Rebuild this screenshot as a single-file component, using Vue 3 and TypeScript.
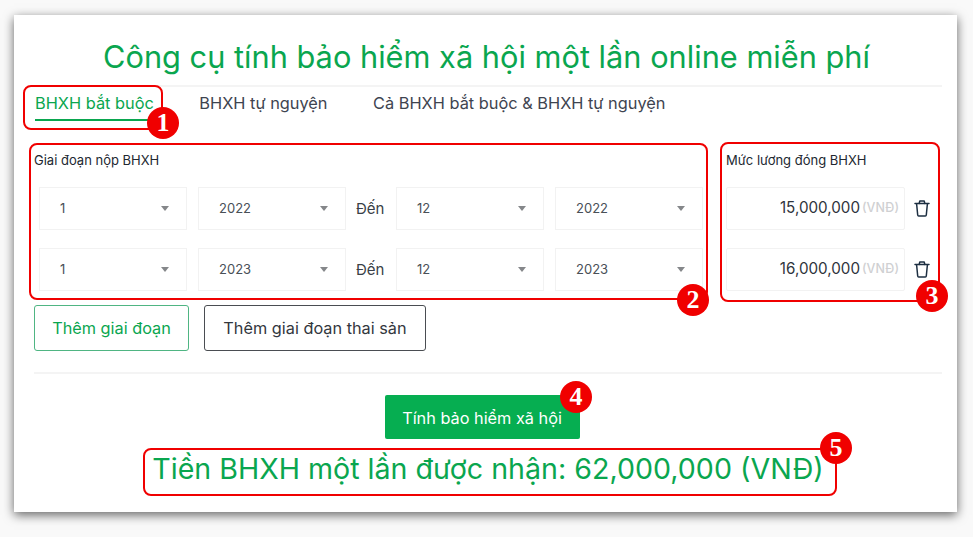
<script setup lang="ts">
interface Period { from: string; year: string; to: string; salary: string }
const periods: Period[] = [
  { from: '1', year: '2022', to: '12', salary: '15,000,000' },
  { from: '1', year: '2023', to: '12', salary: '16,000,000' },
]
const tabs = ['BHXH bắt buộc', 'BHXH tự nguyện', 'Cả BHXH bắt buộc & BHXH tự nguyện']
const marks = [1, 2, 3, 4, 5]
</script>

<template>
  <div class="page">
    <main class="card">
      <h1 class="title">Công cụ tính bảo hiểm xã hội một lần online miễn phí</h1>
      <nav class="tabs">
        <span v-for="(t, i) in tabs" :key="t" class="tab" :class="{ active: i === 0 }">{{ t }}</span>
      </nav>

      <section class="form">
        <div class="periods">
          <div class="label">Giai đoạn nộp BHXH</div>
          <div v-for="p in periods" :key="p.year" class="row">
            <div class="select"><span>{{ p.from }}</span><i class="arrow"></i></div>
            <div class="select"><span>{{ p.year }}</span><i class="arrow"></i></div>
            <span class="to">Đến</span>
            <div class="select"><span>{{ p.to }}</span><i class="arrow"></i></div>
            <div class="select"><span>{{ p.year }}</span><i class="arrow"></i></div>
          </div>
        </div>
        <div class="salaries">
          <div class="label">Mức lương đóng BHXH</div>
          <div v-for="p in periods" :key="p.salary" class="row">
            <div class="money"><span class="amount">{{ p.salary }}</span><span class="unit">(VNĐ)</span></div>
            <svg class="trash" viewBox="0 0 16 17" fill="none" stroke="#1d2f42" stroke-width="1.5" stroke-linejoin="round" stroke-linecap="round">
              <path d="M1 3.6h14" />
              <path d="M5.2 3.4 5.8 1h4.4l.6 2.4" />
              <path d="M2.6 3.8 3.7 15a1 1 0 0 0 1 .9h6.6a1 1 0 0 0 1-.9l1.1-11.2" />
            </svg>
          </div>
        </div>
      </section>

      <div class="actions">
        <button class="btn btn-green">Thêm giai đoạn</button>
        <button class="btn btn-dark">Thêm giai đoạn thai sản</button>
      </div>

      <hr class="rule" />

      <div class="submit"><button class="calc">Tính bảo hiểm xã hội</button></div>
      <p class="result">Tiền BHXH một lần được nhận: 62,000,000 (VNĐ)</p>

      <div v-for="m in marks" :key="'box' + m" class="box" :class="'box' + m"></div>
      <div v-for="m in marks" :key="'badge' + m" class="badge" :class="'badge' + m">{{ m }}</div>
    </main>
  </div>
</template>

<style scoped>
.page {
  width: 973px;
  height: 537px;
  box-sizing: border-box;
  padding: 15px 16px 25px 14px;
  background: #f9f9f9;
  overflow: hidden;
  font-family: Inter, "Noto Sans", sans-serif;
}
.card {
  position: relative;
  box-sizing: border-box;
  height: 497px;
  padding: 20px 15px 0 20px;
  background: #fff;
  box-shadow: 0 3px 10px rgba(0, 0, 0, 0.6);
}
.title {
  margin: 0 0 6px;
  padding-right: 3px;
  font-size: 30.75px;
  line-height: 44px;
  font-weight: 400;
  color: #0aa64f;
  text-align: center;
  white-space: nowrap;
}
.tabs {
  display: flex;
  gap: 45.5px;
  padding-left: 1px;
  border-top: 2px solid #f4f4f4;
}
.tab {
  box-sizing: border-box;
  height: 34px;
  padding-top: 5px;
  font-size: 16.35px;
  line-height: 22px;
  color: #3e4450;
  border-bottom: 2px solid transparent;
}
.tab.active {
  color: #0aa64f;
  border-bottom-color: #0aa64f;
}
.form {
  display: flex;
  justify-content: space-between;
  margin-top: 28px;
}
.label {
  font-size: 13px;
  line-height: 22px;
  color: #222831;
  margin-bottom: 16px;
}
.row {
  display: flex;
  align-items: center;
  height: 43px;
}
.row + .row {
  margin-top: 18px;
}
.periods {
  width: 669px;
}
.periods .row {
  gap: 11px;
  padding-left: 5px;
}
.salaries {
  width: 209px;
  padding-left: 0;
  margin-right: 7px;
}
.select {
  box-sizing: border-box;
  display: flex;
  flex-shrink: 0;
  align-items: center;
  justify-content: space-between;
  width: 148px;
  height: 43px;
  padding: 0 17px 2px 20px;
  border: 1px solid #f2f2f2;
  font-size: 13px;
  color: #495057;
}
.arrow {
  width: 0;
  height: 0;
  border-left: 4.5px solid transparent;
  border-right: 4.5px solid transparent;
  border-top: 5px solid #85878a;
  margin-top: 2px;
}
.to {
  flex: 0 0 28px;
  margin-top: -1px;
  font-size: 15px;
  white-space: nowrap;
  color: #3a3f47;
  text-indent: -1px;
}
.money {
  box-sizing: border-box;
  display: flex;
  align-items: center;
  justify-content: flex-end;
  gap: 2px;
  width: 179px;
  height: 43px;
  padding: 0 5px 2px 0;
  border: 1px solid #f2f2f2;
  border-radius: 2px;
}
.amount {
  font-size: 15.2px;
  color: #2f343c;
}
.unit {
  font-size: 12.5px;
  font-weight: 500;
  color: #cfd0d2;
}
.trash {
  width: 16px;
  height: 17px;
  margin-left: 9px;
}
.actions {
  display: flex;
  gap: 15px;
  margin-top: 14px;
}
.btn {
  box-sizing: border-box;
  height: 46px;
  background: #fff;
  border-radius: 3px;
  font-family: inherit;
  font-size: 16.3px;
  padding: 0;
}
.btn-green {
  width: 155px;
  border: 1px solid #4fb583;
  color: #0aa64f;
}
.btn-dark {
  width: 222px;
  border: 1px solid #4a4d52;
  color: #33373e;
}
.rule {
  margin: 21px 0 21px;
  border: 0;
  border-top: 2px solid #f4f4f4;
}
.submit {
  display: flex;
  justify-content: center;
  padding-right: 12px;
}
.calc {
  width: 195px;
  height: 44px;
  border: 0;
  border-radius: 2px;
  background: #06ae51;
  color: #fff;
  font-family: inherit;
  font-size: 16.3px;
  padding: 2px 0 0;
}
.result {
  margin: 10px 0 0;
  font-size: 28.6px;
  line-height: 40px;
  color: #0aa64f;
  text-align: center;
  white-space: nowrap;
}
.box {
  position: absolute;
  box-sizing: border-box;
  border: 2px solid #f00000;
  border-radius: 8px;
  pointer-events: none;
}
.box1 { left: 9px; top: 70px; width: 140px; height: 45px; }
.box2 { left: 15px; top: 128px; width: 679px; height: 157px; }
.box3 { left: 706px; top: 127px; width: 220px; height: 160px; }
.box4 { display: none; }
.box5 { left: 129px; top: 433px; width: 694px; height: 48px; }
.badge {
  position: absolute;
  box-sizing: border-box;
  width: 32px;
  height: 32px;
  border-radius: 50%;
  background: #f00000;
  color: #fff;
  font-family: "Liberation Serif", serif;
  font-weight: 700;
  font-size: 26px;
  line-height: 32px;
  text-align: center;
}
.badge1 { left: 133px; top: 92px; }
.badge2 { left: 663px; top: 269px; }
.badge3 { left: 902px; top: 265px; }
.badge4 { left: 546px; top: 366px; }
.badge5 { left: 806px; top: 417px; }
</style>
